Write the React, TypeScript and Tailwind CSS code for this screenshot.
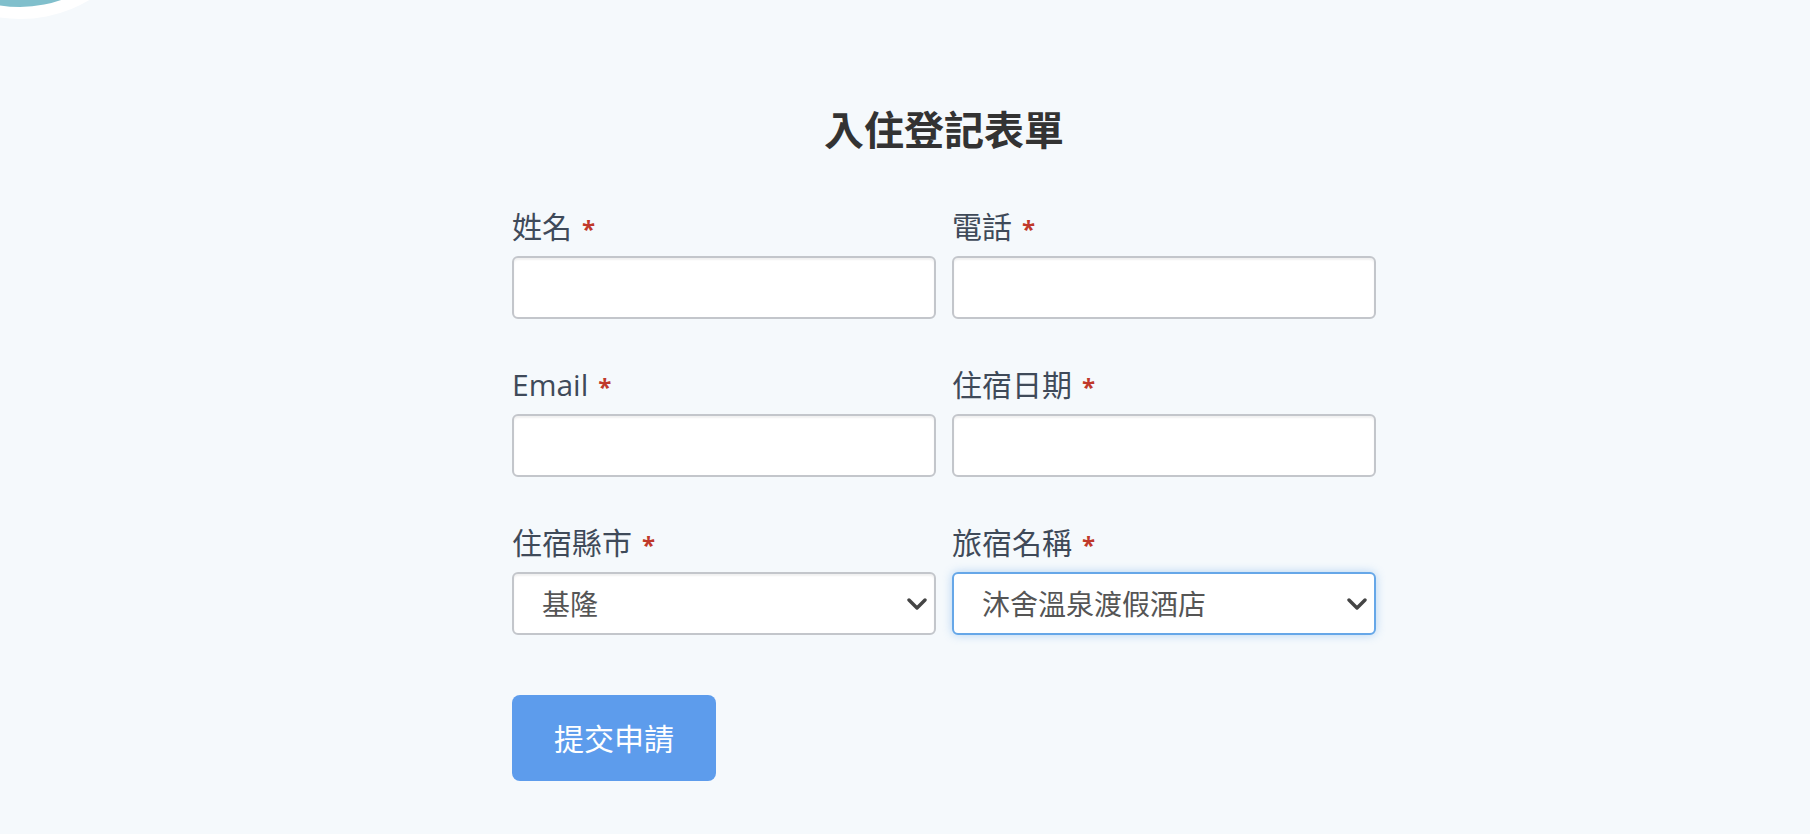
import React, { useState } from 'react';

const fontStack = { fontFamily: '"Open Sans", "Noto Sans CJK TC", sans-serif' };

const Label = ({ text }: { text: string }) => (
  <label className="block mb-[6px] text-[30px] leading-[42px] text-[#3f4a59]">
    {text}
    <span className="ml-2.5 text-[24px] font-bold text-[#c0392b]">*</span>
  </label>
);

const Chevron = () => (
  <svg
    className="pointer-events-none absolute right-[9px] top-1/2 -translate-y-1/2"
    width="20"
    height="12"
    viewBox="0 0 20 12"
    fill="none"
  >
    <path d="M2 2l8 8 8-8" stroke="#444" strokeWidth="3.4" strokeLinecap="round" strokeLinejoin="round" />
  </svg>
);

const inputCls =
  'block w-full h-[63px] rounded-md border-2 border-[#c3c6cb] bg-white px-7 text-[28px] text-[#555] shadow-[inset_0_2px_2px_rgba(0,0,0,0.06)] outline-none';

export default function App() {
  const [city, setCity] = useState('基隆');
  const [hotel, setHotel] = useState('沐舍溫泉渡假酒店');

  return (
    <div className="relative min-h-[834px] w-full overflow-hidden bg-[#f5f9fc]" style={fontStack}>
      {/* partial avatar in the corner */}
      <div className="absolute left-[-116px] top-[-253px] h-[272px] w-[272px] rounded-full bg-white" />
      <div className="absolute left-[-104px] top-[-241px] h-[248px] w-[248px] rounded-full bg-[#80bfcc]" />

      <div className="flex justify-center pl-[78px] pt-[100px]">
        <form className="w-[864px]" onSubmit={(e) => e.preventDefault()}>
          <h1 className="mb-[46px] text-center text-[40px] font-bold leading-[60px] text-[#333]">入住登記表單</h1>

          <div className="grid grid-cols-2 gap-x-4 gap-y-[45px]">
            <div>
              <Label text="姓名" />
              <input className={inputCls} />
            </div>
            <div>
              <Label text="電話" />
              <input className={inputCls} />
            </div>
            <div>
              <Label text="Email" />
              <input className={inputCls} />
            </div>
            <div>
              <Label text="住宿日期" />
              <input className={inputCls} />
            </div>
            <div>
              <Label text="住宿縣市" />
              <div className="relative">
                <select value={city} onChange={(e) => setCity(e.target.value)} className={`${inputCls} appearance-none`}>
                  <option>基隆</option>
                  <option>台北</option>
                  <option>新北</option>
                </select>
                <Chevron />
              </div>
            </div>
            <div>
              <Label text="旅宿名稱" />
              <div className="relative">
                <select
                  value={hotel}
                  onChange={(e) => setHotel(e.target.value)}
                  className="block w-full h-[63px] appearance-none rounded-md border-2 border-[#66a7e8] bg-white px-7 text-[28px] text-[#555] shadow-[0_0_10px_rgba(102,167,232,0.45)] outline-none"
                >
                  <option>沐舍溫泉渡假酒店</option>
                  <option>基隆長榮桂冠酒店</option>
                </select>
                <Chevron />
              </div>
            </div>
          </div>

          <button
            type="submit"
            className="mt-[60px] h-[86px] w-[204px] rounded-lg bg-[#5d9cec] text-[30px] font-normal text-white"
          >
            提交申請
          </button>
        </form>
      </div>
    </div>
  );
}
